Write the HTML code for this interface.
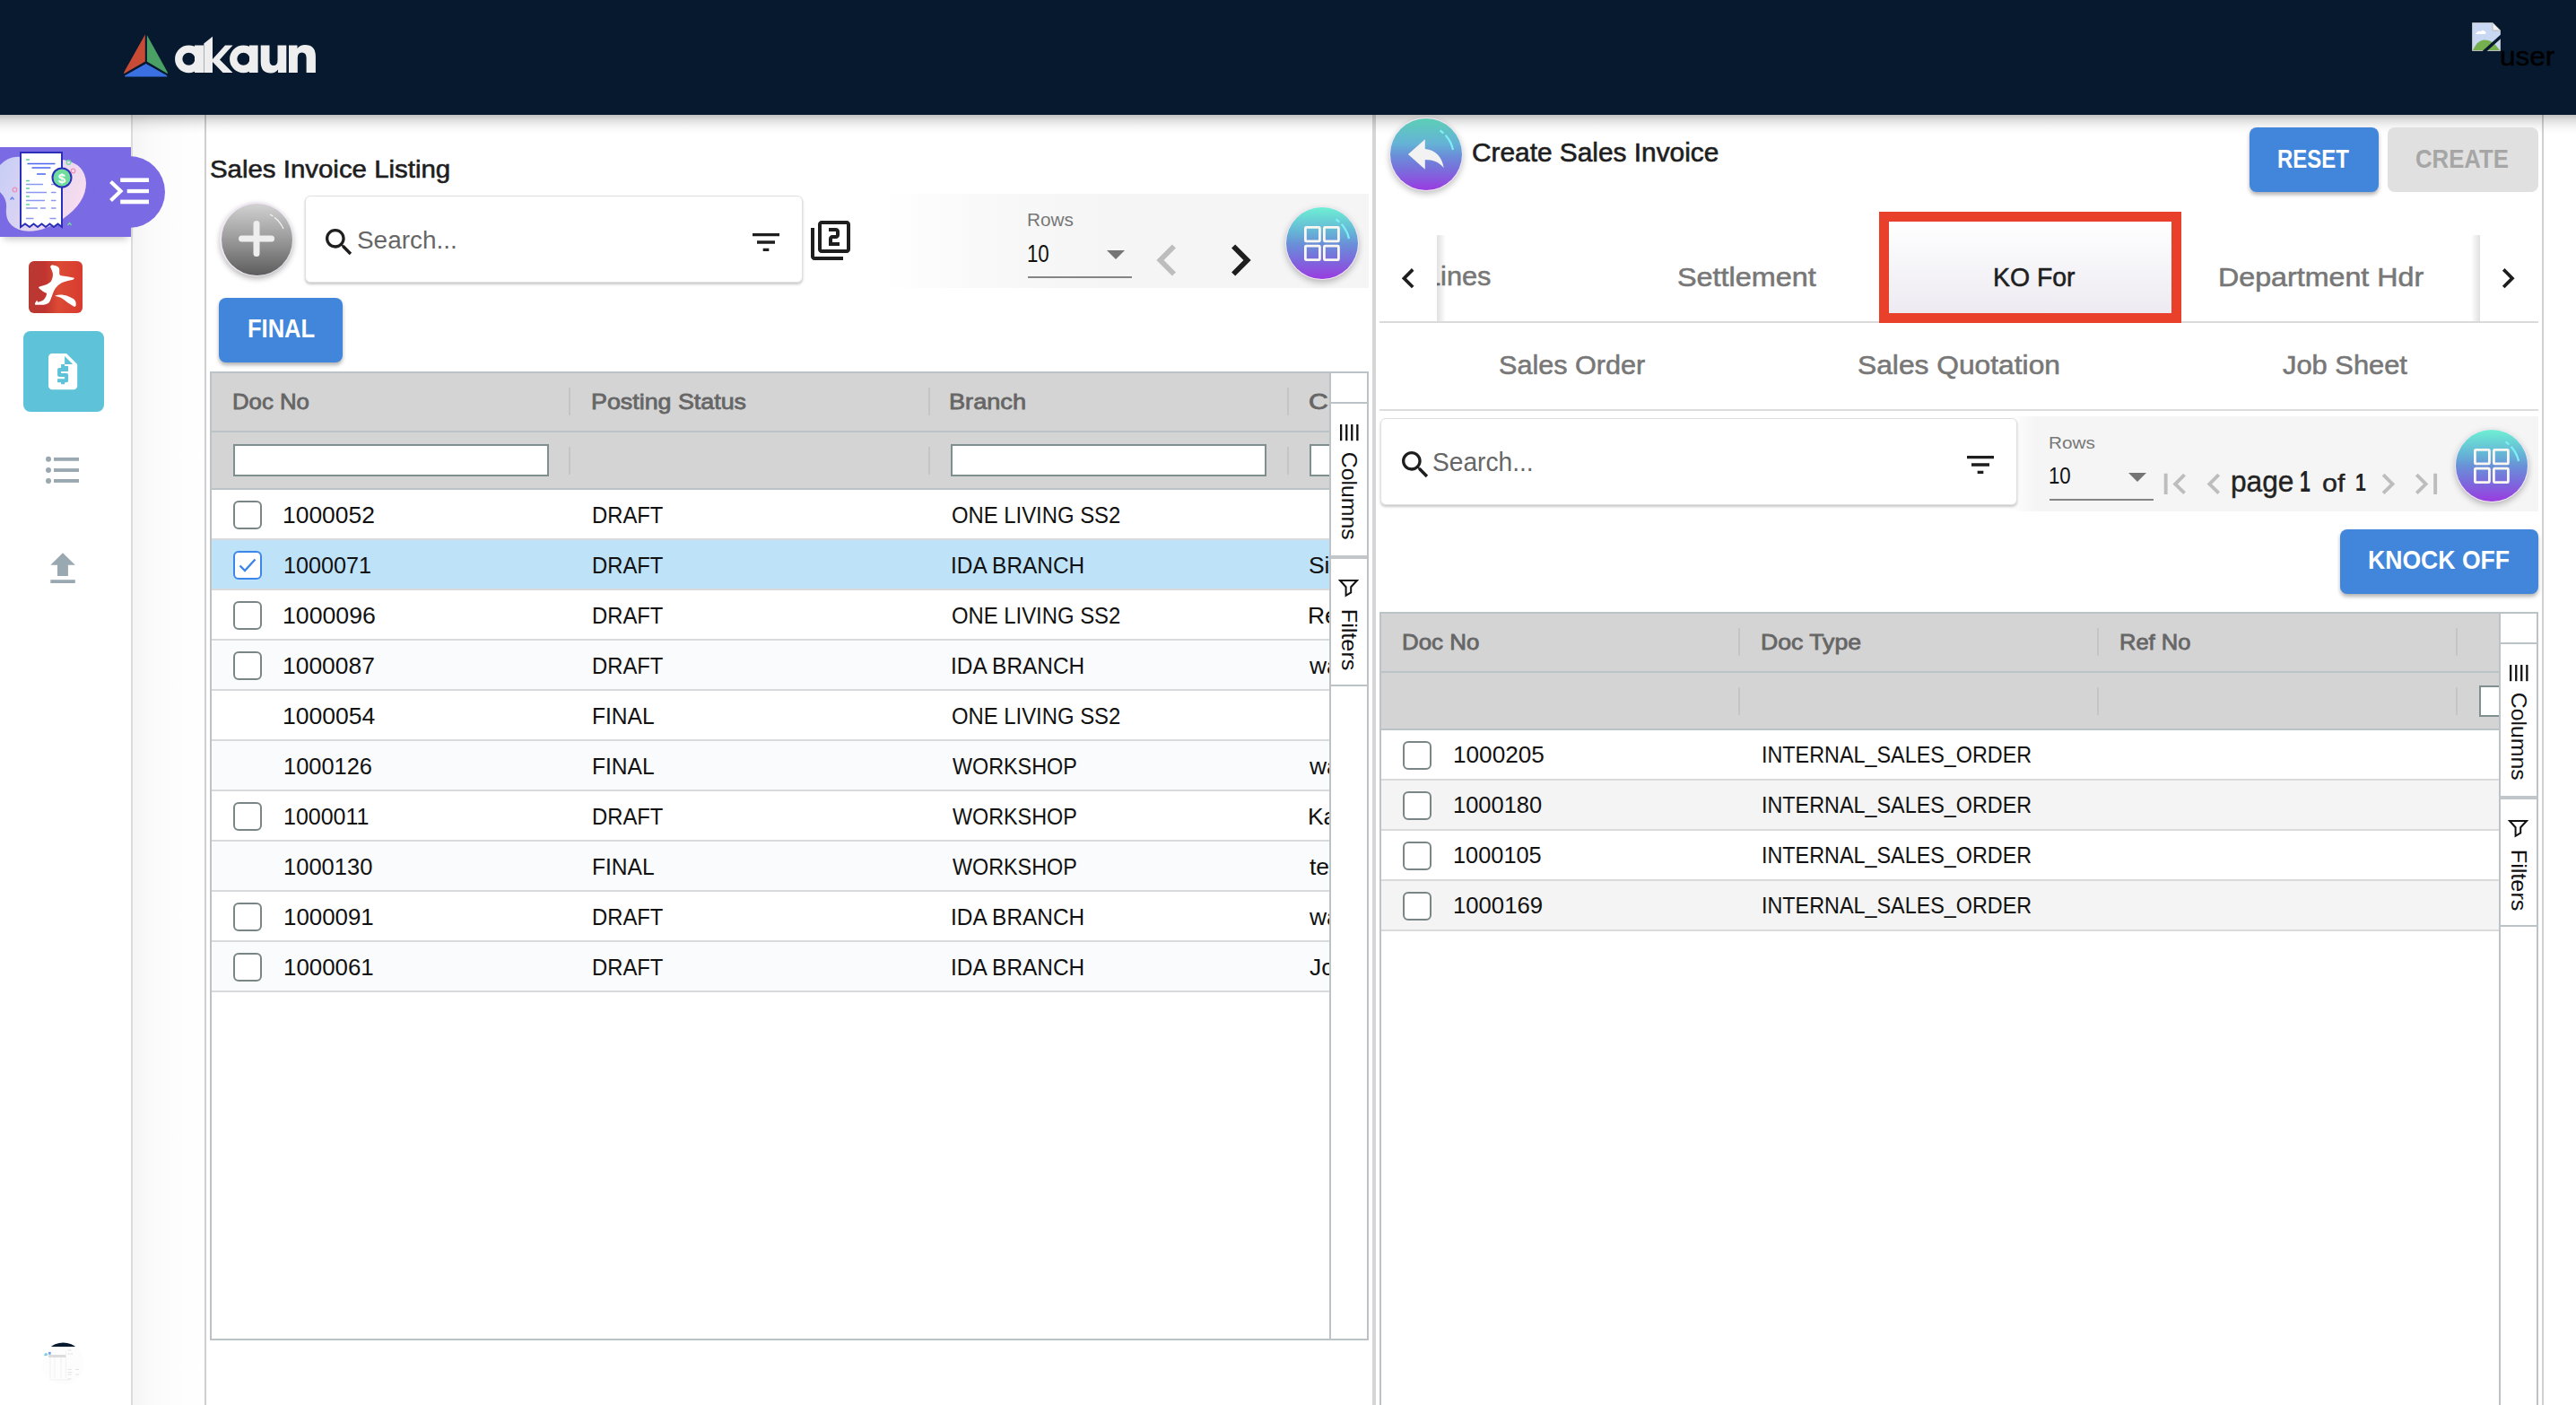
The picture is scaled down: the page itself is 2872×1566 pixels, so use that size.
<!DOCTYPE html>
<html><head><meta charset="utf-8"><style>
html,body{margin:0;padding:0;width:2872px;height:1566px;overflow:hidden;background:#fff}
.b{position:absolute;}
.t{position:absolute;white-space:nowrap;line-height:1;font-family:"Liberation Sans",sans-serif;transform-origin:0 0;}
svg.b{overflow:visible}
</style></head><body>
<div class="b" style="left:0px;top:0px;width:2872px;height:1566px;background:#ffffff;"></div><div class="b" style="left:148px;top:128px;width:80px;height:1438px;background:linear-gradient(to right,#f5f5f5,#fafafa 25%,#fdfdfd 55%,#ffffff);"></div><div class="b" style="left:146px;top:128px;width:2px;height:1438px;background:#dcdcdc;"></div><div class="b" style="left:228px;top:128px;width:2px;height:1438px;background:#cfcfcf;"></div><div class="b" style="left:1530px;top:128px;width:4px;height:1438px;background:#d6d6d6;"></div><div class="b" style="left:2834px;top:128px;width:2px;height:1438px;background:#d0d0d0;"></div><div class="b" style="left:0px;top:0px;width:2872px;height:128px;background:#06192f;"></div><div class="b" style="left:0px;top:128px;width:2872px;height:22px;background:linear-gradient(to bottom,rgba(0,0,0,0.24),rgba(0,0,0,0.13) 25%,rgba(0,0,0,0.05) 55%,rgba(0,0,0,0.015) 80%,rgba(0,0,0,0));"></div><svg class="b" style="left:130px;top:30px;" width="70" height="62" viewBox="0 0 70 62">
<path d="M32 8.5 Q32 8 31.5 9 L8.5 50 Q7 53 10 52 L32 39.5 Z" fill="#c84b36"/>
<path d="M33.5 8.5 L56.5 50 Q58 53 55 52 L33.5 39.5 Z" fill="#4ba066"/>
<path d="M32.7 41 L9.5 54 Q8 55.5 11 55.5 L54.5 55.5 Q57.5 55.5 56 54 Z" fill="#3b70e2"/>
<path d="M32.8 6 V39.2 L6 54.5 M32.8 39.2 L59 54.5" fill="none" stroke="#06192f" stroke-width="2"/>
</svg><svg class="b" style="left:190px;top:36px;" width="170" height="50" viewBox="0 0 170 50">
<g fill="#eeeeee">
<circle cx="20.4" cy="29.8" r="11.2" fill="none" stroke="#eeeeee" stroke-width="8.3"/>
<rect x="27" y="14.5" width="10" height="30.5"/>
<path d="M37.3 12.5 L47 4.7 L47 45 L37.3 45 Z"/>
<path d="M47 30 L61 14.5 L69.5 14.5 L55 30.5 L69.5 45 L58.5 45 L47 33 Z"/>
<circle cx="81.4" cy="29.8" r="11.2" fill="none" stroke="#eeeeee" stroke-width="8.3"/>
<rect x="88" y="14.5" width="9.6" height="30.5"/>
<path d="M100.7 14.5 L110.5 14.5 L110.5 31 Q110.5 37 115 37 Q119.5 37 119.5 31 L119.5 14.5 L129.3 14.5 L129.3 45 L120 45 L120 41.5 Q117 45.5 112 45.5 Q100.7 45.5 100.7 33 Z"/>
<path d="M132 45 L141.8 45 L141.8 28.5 Q141.8 22.5 146.5 22.5 Q151.6 22.5 151.6 28.5 L151.6 45 L161.9 45 L161.9 27 Q161.9 14 150 14 Q144.5 14 141.5 18 L141.5 14.5 L132 14.5 Z"/>
</g></svg><svg class="b" style="left:2756px;top:25px;" width="32" height="32" viewBox="0 0 32 32">
<path d="M0.5 0.5 H23 L31.5 9 V31.5 H0.5 Z" fill="#c8d8f2" stroke="#b9b9b9" stroke-width="1"/>
<path d="M23 0.5 V9 H31.5" fill="#f2f2f2" stroke="#b9b9b9" stroke-width="1"/>
<path d="M4 13 Q6 8.5 10 10 Q12 7.5 15 10.5 Q16.5 12 14.5 13 Z" fill="#ffffff"/>
<path d="M1 31 Q6 20 13 19.5 Q22 19 27 26 L31 31 Z" fill="#76b04e"/>
<path d="M13 33 L33 15" stroke="#06192f" stroke-width="3.5"/>
</svg><div class="t" style="left:2787.35px;top:48.10px;font-size:30.30px;color:#000;transform:scaleX(1.0397);-webkit-text-stroke:0.5px #000;">user</div><div class="b" style="left:0;top:164px;width:146px;height:100px;background:#7a6ae4;box-shadow:0 6px 8px -4px rgba(0,0,0,0.25)"></div><div class="b" style="left:104px;top:174px;width:80px;height:80px;border-radius:40px;background:#7a6ae4"></div><svg class="b" style="left:0px;top:164px;" width="100" height="100" viewBox="0 0 100 100">
<defs><linearGradient id="blob" x1="0" y1="0" x2="1" y2="0.3"><stop offset="0" stop-color="#c6cdf6"/><stop offset="1" stop-color="#f6dcee"/></linearGradient></defs>
<path d="M0 20 Q10 9 25 11 Q45 13 70 14 Q95 18 96 40 Q96 62 70 80 Q45 97 25 93 Q5 88 7 68 Q8 58 0 50 Z" fill="url(#blob)"/>
<path d="M23 6 H69 V89 L64.5 85.5 L60 89 L55.5 85.5 L51 89 L46.5 85.5 L42 89 L37.5 85.5 L33 89 L28 85.5 L23 89 Z" fill="#fff" stroke="#2b2fb8" stroke-width="2"/>
<g transform="translate(0 -4)"><g stroke-width="1.3" stroke-linecap="round">
<path d="M29.5 18 H32.5 M29.5 41.5 H32.5 M29.5 50 H32.5 M29.5 59 H32.5 M29.5 68 H32.5" stroke="#56d59a"/>
<path d="M31 22.5 H61 M36 27 H56 M41.5 34 H50.5" stroke="#4a66ee"/>
<path d="M29.5 45.5 H47.5 M29.5 54.5 H51.5 M29.5 63.5 H49.5 M29.5 72 H41.5 M45.5 72 H50.5 M57.5 72 H62 M57.5 45.5 H62 M57.5 54.5 H62 M57.5 63.5 H62 M29.5 83.5 H37 M56 83.5 H62" stroke="#8a98f0"/>
</g>
<circle cx="69" cy="38" r="10.5" fill="#6fdc9e" stroke="#2b2fb8" stroke-width="2"/>
<text x="69" y="43.5" font-family="Liberation Sans" font-weight="bold" font-size="15" fill="#fff" text-anchor="middle">$</text></g>
<circle cx="76.5" cy="17" r="2.3" fill="none" stroke="#6fdc9e" stroke-width="1.3"/>
<circle cx="81.5" cy="26.5" r="2.3" fill="none" stroke="#f090b8" stroke-width="1.3"/>
<circle cx="16.5" cy="47.5" r="2.3" fill="none" stroke="#f090b8" stroke-width="1.3"/>
<path d="M11.5 58.5 L13.5 56 L15.5 58.5" fill="none" stroke="#5a7cf0" stroke-width="1.3"/>
<path d="M75.5 87 L77.5 84.5 L79.5 87" fill="none" stroke="#6fdc9e" stroke-width="1.3"/>
</svg><svg class="b" style="left:120px;top:196px;" width="50" height="34" viewBox="0 0 50 34">
<path d="M3.5 6.5 L14.5 17 L3.5 27.5" fill="none" stroke="#fff" stroke-width="4.2"/>
<rect x="14.2" y="2.4" width="31.8" height="4.6" fill="#fff"/>
<rect x="21.7" y="14.9" width="24.3" height="4.3" fill="#fff"/>
<rect x="14.2" y="26.6" width="31.8" height="4.7" fill="#fff"/>
</svg><svg class="b" style="left:32px;top:291px;" width="60" height="58" viewBox="0 0 60 58">
<defs><linearGradient id="rg" x1="0" x2="1"><stop offset="0" stop-color="#b83a32"/><stop offset="0.3" stop-color="#c03430"/><stop offset="0.55" stop-color="#dc4a34"/><stop offset="1" stop-color="#d83c30"/></linearGradient></defs>
<rect x="0" y="0" width="60" height="58" rx="6" fill="url(#rg)"/>
<g fill="#fff">
<path d="M24.6 5.2 Q26 4.2 27 4.4 Q31 5 32.8 6.6 Q34.5 8 34.2 9.5 L34.2 14.4 Q35 15.8 36.2 16.3 Q43 17 50.7 18.7 Q51 20 49.2 20.7 Q42 22 37.1 24 Q32.5 26.5 29.9 30.3 Q28 33 27 36.1 L24.6 42.4 Q23.5 45.5 22.1 46.8 Q20 48.5 16.8 48.7 L7.6 48.7 Q6.5 48.3 6.9 47.3 L9.1 43.4 Q9.8 45.5 10.5 45.8 Q14 44.8 16.3 43.4 Q18.3 41.5 19.2 39.5 Q20 37.5 20.2 36.1 Q18 35 15.8 33.7 Q12.5 31.5 11 29.8 Q11.2 28.6 12 28.4 Q16.5 27.5 20.2 26 Q23.5 24.5 25 22.6 Q26.8 19 27 15.8 Q27 13 26 11 Q25 8.5 24.1 6.6 Z"/>
<path d="M29.4 38.6 Q33 37.4 37.1 37.6 Q42.5 38.3 46.8 40.5 Q51 42.3 52.1 44.4 Q53.2 47.5 52.6 49.7 Q52 51 50.7 50.7 Q47 48.8 43.4 46.3 Q39.5 43 36.2 41 Q33 39.3 29.9 39 Z"/>
</g></svg><div class="b" style="left:26px;top:369px;width:90px;height:90px;border-radius:8px;background:#5ec3d8"></div><svg class="b" style="left:45.8px;top:390px;" width="48.2" height="48.2" viewBox="0 0 24 24"><path d="M14 2H6c-1.1 0-1.99.9-1.99 2L4 20c0 1.1.89 2 1.99 2H18c1.1 0 2-.9 2-2V8l-6-6zm1 10h-4v1h3c.55 0 1 .45 1 1v3c0 .55-.45 1-1 1h-1v1h-2v-1H9v-2h4v-1h-3c-.55 0-1-.45-1-1v-3c0-.55.45-1 1-1h1V8h2v1h2v2zm-2-4V3.5L17.5 8H13z" fill="#fff"/></svg><svg class="b" style="left:48px;top:506px;" width="42" height="36" viewBox="0 0 42 36">
<g fill="#9aa8b1"><circle cx="6" cy="5.8" r="3"/><circle cx="6" cy="18" r="3"/><circle cx="6" cy="29.9" r="3"/>
<rect x="12" y="3.9" width="28" height="3.9"/><rect x="12" y="16.1" width="28" height="3.9"/><rect x="12" y="28" width="28" height="3.9"/></g></svg><svg class="b" style="left:54px;top:614px;" width="32" height="38" viewBox="0 0 32 38">
<g fill="#9aa8b1"><path d="M16 2.3 L29.8 15.7 H21.9 V27.9 H10 V15.7 H2.3 Z"/><rect x="2.3" y="32.2" width="27.5" height="3.8"/></g></svg><svg class="b" style="left:46px;top:1496px;" width="50" height="48" viewBox="0 0 50 48">
<defs><clipPath id="av"><circle cx="24.5" cy="24" r="23.5"/></clipPath></defs>
<g clip-path="url(#av)"><rect width="50" height="48" fill="#fdfdfd"/><rect y="0" width="50" height="5" fill="#06192f"/>
<rect x="8.1" y="10.9" width="2.6" height="2.8" fill="#6aa3ea"/>
<ellipse cx="4.8" cy="13.6" rx="2.3" ry="1.7" fill="#7ccfe0"/>
<rect x="8.1" y="14" width="19.2" height="3" fill="#dcdcdc"/>
<g stroke="#e6e6e6" stroke-width="0.5"><path d="M10 17 V40 M15 17 V40 M22 17 V40 M27.5 10 V40 M8 42 H31"/></g>
<g fill="#e2e2e2"><rect x="29.5" y="8.5" width="4" height="1"/><rect x="29.5" y="12.5" width="3" height="1"/><rect x="33" y="12.5" width="2" height="1"/><rect x="29.5" y="30" width="4" height="1"/><rect x="38" y="30" width="4" height="1"/><rect x="29.5" y="33" width="5" height="1"/><rect x="29.5" y="35.5" width="4" height="1"/><rect x="38" y="35.5" width="4" height="1"/><rect x="29.5" y="40.5" width="4" height="1"/></g>
</g></svg><div class="t" style="left:233.93px;top:175.35px;font-size:28.05px;color:#1e1e1e;transform:scaleX(1.0488);-webkit-text-stroke:0.6px #1e1e1e;">Sales Invoice Listing</div><div class="b" style="left:245px;top:225px;width:82px;height:83px;border-radius:50%;background:#efe8f4;box-shadow:0 3px 6px rgba(0,0,0,0.28)"></div><div class="b" style="left:246.5px;top:226.5px;width:79px;height:80px;border-radius:50%;background:linear-gradient(#d2d2d2,#9a9a9a 50%,#5c5c5c)"></div><svg class="b" style="left:245px;top:225px;" width="81" height="81" viewBox="0 0 81 81">
<path d="M56 14 A34 34 0 0 1 71 30" fill="none" stroke="#f4f4f4" stroke-width="1.2" stroke-dasharray="4 2 30"/>
<rect x="21" y="37.5" width="40" height="7" rx="3.5" fill="#eeeeee"/>
<rect x="37.5" y="21" width="7" height="40" rx="3.5" fill="#eeeeee"/></svg><div class="b" style="left:339.5px;top:218px;width:555px;height:97px;border-radius:6px;background:#fff;border:1px solid #e0e0e0;box-sizing:border-box;box-shadow:0 2px 3px rgba(0,0,0,0.22)"></div><svg class="b" style="left:358px;top:250px;" width="40" height="40" viewBox="0 0 24 24"><path d="M15.5 14h-.79l-.28-.27C15.41 12.59 16 11.11 16 9.5 16 5.91 13.09 3 9.5 3S3 5.91 3 9.5 5.91 16 9.5 16c1.61 0 3.09-.59 4.23-1.57l.27.28v.79l5 4.99L20.49 19l-4.99-5zm-6 0C7.01 14 5 11.99 5 9.5S7.01 5 9.5 5 14 7.01 14 9.5 11.99 14 9.5 14z" fill="#1e1e1e"/></svg><div class="t" style="left:398.04px;top:253.69px;font-size:27.18px;color:#666;transform:scaleX(1.0271);">Search...</div><svg class="b" style="left:834px;top:250px;" width="40" height="40" viewBox="0 0 24 24"><path d="M10 18h4v-2h-4v2zM3 6v2h18V6H3zm3 7h12v-2H6v2z" fill="#1e1e1e"/></svg><svg class="b" style="left:902px;top:244px;" width="48" height="48" viewBox="0 0 24 24"><path d="M3 5H1v16c0 1.1.9 2 2 2h16v-2H3V5zm18-4H7c-1.1 0-2 .9-2 2v14c0 1.1.9 2 2 2h14c1.1 0 2-.9 2-2V3c0-1.1-.9-2-2-2zm0 16H7V3h14v14zm-4-4h-4v-2h2c1.1 0 2-.89 2-2V7c0-1.11-.9-2-2-2h-4v2h4v2h-2c-1.1 0-2 .89-2 2v4h6v-2z" fill="#1e1e1e"/></svg><div class="b" style="left:985px;top:216px;width:541px;height:105px;background:linear-gradient(to right,rgba(245,245,245,0),rgba(245,245,245,0.6) 20%,#f5f5f5 45%,#f5f5f5);"></div><div class="t" style="left:1144.59px;top:235.89px;font-size:19.62px;color:#777;transform:scaleX(1.0577);">Rows</div><div class="t" style="left:1145.33px;top:268.68px;font-size:27.25px;color:#111;transform:scaleX(0.8164);">10</div><svg class="b" style="left:1232px;top:277px;" width="24" height="14" viewBox="0 0 24 14"><path d="M2 2 H22 L12 12 Z" fill="#757575"/></svg><div class="b" style="left:1146px;top:308px;width:116px;height:2px;background:#858585;"></div><svg class="b" style="left:1266px;top:255px;" width="70" height="70" viewBox="0 0 24 24"><g fill="#bdbdbd"><path d="M15.41 7.41L14 6l-6 6 6 6 1.41-1.41L10.83 12z"/></g></svg><svg class="b" style="left:1348px;top:255px;" width="70" height="70" viewBox="0 0 24 24"><g fill="#1e1e1e"><path d="M10 6L8.59 7.41 13.17 12l-4.58 4.59L10 18l6-6z"/></g></svg><div class="b" style="left:1433px;top:229.5px;width:82px;height:82px;border-radius:50%;background:#f1e9f5;box-shadow:0 3px 7px rgba(0,0,0,0.25)"></div><div class="b" style="left:1434px;top:230.5px;width:80px;height:80px;border-radius:50%;background:linear-gradient(#6ef0d4,#65b3d6 35%,#6a8ed8 52%,#7a6ddc 72%,#9a3ce0)"></div><svg class="b" style="left:1434px;top:230.5px;" width="80" height="80" viewBox="0 0 80 80"><path d="M55.5 13.5 A34 34 0 0 1 70 35" fill="none" stroke="#80eef6" stroke-width="2.2" stroke-dasharray="5 3 40"/><g fill="none" stroke="#faf6f2" stroke-width="2.8"><rect x="21.4" y="22.3" width="16" height="15.6" rx="1"/><rect x="42.4" y="22.3" width="16" height="15.6" rx="1"/><rect x="21.4" y="43.1" width="16" height="15.6" rx="1"/><rect x="42.4" y="43.1" width="16" height="15.6" rx="1"/></g></svg><div class="b" style="left:244px;top:332px;width:138px;height:72px;border-radius:8px;background:#4286dc;box-shadow:0 3px 4px rgba(0,0,0,0.3)"></div><div class="t" style="left:275.64px;top:352.47px;font-size:29.22px;color:#fff;font-weight:bold;transform:scaleX(0.8731);">FINAL</div><div class="b" style="left:234px;top:414px;width:1292px;height:1080px;border:2px solid #bcc3c7;box-sizing:border-box"></div><div class="b" style="left:236px;top:416px;width:1247px;height:64px;background:#d4d4d4;"></div><div class="b" style="left:236px;top:480px;width:1247px;height:2px;background:#bcc3c7;"></div><div class="b" style="left:236px;top:482px;width:1247px;height:62px;background:#d4d4d4;"></div><div class="b" style="left:236px;top:544px;width:1247px;height:2px;background:#bcc3c7;"></div><div class="b" style="left:634px;top:432px;width:2px;height:31px;background:#c2c6c8;"></div><div class="b" style="left:634px;top:498px;width:2px;height:31px;background:#c2c6c8;"></div><div class="b" style="left:1035px;top:432px;width:2px;height:31px;background:#c2c6c8;"></div><div class="b" style="left:1035px;top:498px;width:2px;height:31px;background:#c2c6c8;"></div><div class="b" style="left:1435px;top:432px;width:2px;height:31px;background:#c2c6c8;"></div><div class="b" style="left:1435px;top:498px;width:2px;height:31px;background:#c2c6c8;"></div><div class="t" style="left:259.24px;top:436.28px;font-size:24.71px;color:#666;transform:scaleX(1.0435);-webkit-text-stroke:0.8px #666;">Doc No</div><div class="t" style="left:658.60px;top:436.28px;font-size:24.71px;color:#666;transform:scaleX(1.0860);-webkit-text-stroke:0.8px #666;">Posting Status</div><div class="t" style="left:1058.33px;top:436.28px;font-size:24.71px;color:#666;transform:scaleX(1.0989);-webkit-text-stroke:0.8px #666;">Branch</div><div class="b" style="left:1440px;top:416px;width:43px;height:128px;overflow:hidden"><div class="t" style="left:19.49px;top:20.28px;font-size:24.71px;color:#666;transform:scaleX(1.2211);-webkit-text-stroke:0.8px #666;">Cu</div></div><div class="b" style="left:260px;top:495px;width:352px;height:36px;border:2px solid #7f8f8f;box-sizing:border-box;background:#fff"></div><div class="b" style="left:1060px;top:495px;width:352px;height:36px;border:2px solid #7f8f8f;box-sizing:border-box;background:#fff"></div><div class="b" style="left:1460px;top:495px;width:23px;height:36px;border:2px solid #7f8f8f;border-right:none;box-sizing:border-box;background:#fff"></div><div class="b" style="left:236px;top:600px;width:1247px;height:2px;background:#d8dadc;"></div><div class="b" style="left:260px;top:558px;width:32px;height:32px;border:2.5px solid #7a8686;border-radius:6px;box-sizing:border-box;background:#fff"></div><div class="t" style="left:315.47px;top:561.75px;font-size:25.4px;color:#111;transform:scaleX(1.040457592203365)">1000052</div><div class="t" style="left:660.04px;top:561.75px;font-size:25.4px;color:#111;transform:scaleX(0.9385436727529801)">DRAFT</div><div class="t" style="left:1060.63px;top:561.75px;font-size:25.4px;color:#111;transform:scaleX(0.9394271514649508)">ONE LIVING SS2</div><div class="b" style="left:236px;top:602px;width:1247px;height:54px;background:#bee2f8;"></div><div class="b" style="left:236px;top:656px;width:1247px;height:2px;background:#d8dadc;"></div><div class="b" style="left:260px;top:614px;width:32px;height:32px;border:2.5px solid #3b86e8;border-radius:6px;box-sizing:border-box;background:#fff"></div><svg class="b" style="left:260px;top:614px;" width="32" height="32" viewBox="0 0 32 32"><path d="M7.5 16.5 L13 22 L24.5 9.5" fill="none" stroke="#3b86e8" stroke-width="2.4"/></svg><div class="t" style="left:315.56px;top:617.75px;font-size:25.4px;color:#111;transform:scaleX(0.9920842122851354)">1000071</div><div class="t" style="left:660.04px;top:617.75px;font-size:25.4px;color:#111;transform:scaleX(0.9385436727529801)">DRAFT</div><div class="t" style="left:1059.50px;top:617.75px;font-size:25.4px;color:#111;transform:scaleX(0.9610541106604098)">IDA BRANCH</div><div class="b" style="left:1440px;top:602px;width:43px;height:54px;overflow:hidden"><div class="t" style="left:18.81px;top:15.75px;font-size:25.4px;color:#111;transform:scaleX(1.04)">Si</div></div><div class="b" style="left:236px;top:712px;width:1247px;height:2px;background:#d8dadc;"></div><div class="b" style="left:260px;top:670px;width:32px;height:32px;border:2.5px solid #7a8686;border-radius:6px;box-sizing:border-box;background:#fff"></div><div class="t" style="left:315.45px;top:673.75px;font-size:25.4px;color:#111;transform:scaleX(1.0507378630651303)">1000096</div><div class="t" style="left:660.04px;top:673.75px;font-size:25.4px;color:#111;transform:scaleX(0.9385436727529801)">DRAFT</div><div class="t" style="left:1060.63px;top:673.75px;font-size:25.4px;color:#111;transform:scaleX(0.9394271514649508)">ONE LIVING SS2</div><div class="b" style="left:1440px;top:658px;width:43px;height:54px;overflow:hidden"><div class="t" style="left:17.89px;top:15.75px;font-size:25.4px;color:#111;transform:scaleX(1.04)">Re</div></div><div class="b" style="left:236px;top:714px;width:1247px;height:54px;background:#fafbfd;"></div><div class="b" style="left:236px;top:768px;width:1247px;height:2px;background:#d8dadc;"></div><div class="b" style="left:260px;top:726px;width:32px;height:32px;border:2.5px solid #7a8686;border-radius:6px;box-sizing:border-box;background:#fff"></div><div class="t" style="left:315.47px;top:729.75px;font-size:25.4px;color:#111;transform:scaleX(1.040457592203365)">1000087</div><div class="t" style="left:660.04px;top:729.75px;font-size:25.4px;color:#111;transform:scaleX(0.9385436727529801)">DRAFT</div><div class="t" style="left:1059.50px;top:729.75px;font-size:25.4px;color:#111;transform:scaleX(0.9610541106604098)">IDA BRANCH</div><div class="b" style="left:1440px;top:714px;width:43px;height:54px;overflow:hidden"><div class="t" style="left:20.00px;top:15.75px;font-size:25.4px;color:#111;transform:scaleX(1.04)">wa</div></div><div class="b" style="left:236px;top:824px;width:1247px;height:2px;background:#d8dadc;"></div><div class="t" style="left:315.46px;top:785.75px;font-size:25.4px;color:#111;transform:scaleX(1.0453614038007468)">1000054</div><div class="t" style="left:659.98px;top:785.75px;font-size:25.4px;color:#111;transform:scaleX(0.9679982662717619)">FINAL</div><div class="t" style="left:1060.63px;top:785.75px;font-size:25.4px;color:#111;transform:scaleX(0.9394271514649508)">ONE LIVING SS2</div><div class="b" style="left:236px;top:826px;width:1247px;height:54px;background:#fafbfd;"></div><div class="b" style="left:236px;top:880px;width:1247px;height:2px;background:#d8dadc;"></div><div class="t" style="left:315.54px;top:841.75px;font-size:25.4px;color:#111;transform:scaleX(1.0011993533920844)">1000126</div><div class="t" style="left:659.98px;top:841.75px;font-size:25.4px;color:#111;transform:scaleX(0.9679982662717619)">FINAL</div><div class="t" style="left:1061.58px;top:841.75px;font-size:25.4px;color:#111;transform:scaleX(0.9190807855299922)">WORKSHOP</div><div class="b" style="left:1440px;top:826px;width:43px;height:54px;overflow:hidden"><div class="t" style="left:20.00px;top:15.75px;font-size:25.4px;color:#111;transform:scaleX(1.04)">wa</div></div><div class="b" style="left:236px;top:936px;width:1247px;height:2px;background:#d8dadc;"></div><div class="b" style="left:260px;top:894px;width:32px;height:32px;border:2.5px solid #7a8686;border-radius:6px;box-sizing:border-box;background:#fff"></div><div class="t" style="left:315.57px;top:897.75px;font-size:25.4px;color:#111;transform:scaleX(0.9842519685039369)">1000011</div><div class="t" style="left:660.04px;top:897.75px;font-size:25.4px;color:#111;transform:scaleX(0.9385436727529801)">DRAFT</div><div class="t" style="left:1061.58px;top:897.75px;font-size:25.4px;color:#111;transform:scaleX(0.9190807855299922)">WORKSHOP</div><div class="b" style="left:1440px;top:882px;width:43px;height:54px;overflow:hidden"><div class="t" style="left:17.89px;top:15.75px;font-size:25.4px;color:#111;transform:scaleX(1.04)">Ka</div></div><div class="b" style="left:236px;top:938px;width:1247px;height:54px;background:#fafbfd;"></div><div class="b" style="left:236px;top:992px;width:1247px;height:2px;background:#d8dadc;"></div><div class="t" style="left:315.54px;top:953.75px;font-size:25.4px;color:#111;transform:scaleX(1.005082697996084)">1000130</div><div class="t" style="left:659.98px;top:953.75px;font-size:25.4px;color:#111;transform:scaleX(0.9679982662717619)">FINAL</div><div class="t" style="left:1061.58px;top:953.75px;font-size:25.4px;color:#111;transform:scaleX(0.9190807855299922)">WORKSHOP</div><div class="b" style="left:1440px;top:938px;width:43px;height:54px;overflow:hidden"><div class="t" style="left:19.60px;top:15.75px;font-size:25.4px;color:#111;transform:scaleX(1.04)">te</div></div><div class="b" style="left:236px;top:1048px;width:1247px;height:2px;background:#d8dadc;"></div><div class="b" style="left:260px;top:1006px;width:32px;height:32px;border:2.5px solid #7a8686;border-radius:6px;box-sizing:border-box;background:#fff"></div><div class="t" style="left:315.51px;top:1009.75px;font-size:25.4px;color:#111;transform:scaleX(1.018191691555797)">1000091</div><div class="t" style="left:660.04px;top:1009.75px;font-size:25.4px;color:#111;transform:scaleX(0.9385436727529801)">DRAFT</div><div class="t" style="left:1059.50px;top:1009.75px;font-size:25.4px;color:#111;transform:scaleX(0.9610541106604098)">IDA BRANCH</div><div class="b" style="left:1440px;top:994px;width:43px;height:54px;overflow:hidden"><div class="t" style="left:20.00px;top:15.75px;font-size:25.4px;color:#111;transform:scaleX(1.04)">wa</div></div><div class="b" style="left:236px;top:1050px;width:1247px;height:54px;background:#fafbfd;"></div><div class="b" style="left:236px;top:1104px;width:1247px;height:2px;background:#d8dadc;"></div><div class="b" style="left:260px;top:1062px;width:32px;height:32px;border:2.5px solid #7a8686;border-radius:6px;box-sizing:border-box;background:#fff"></div><div class="t" style="left:315.51px;top:1065.75px;font-size:25.4px;color:#111;transform:scaleX(1.018191691555797)">1000061</div><div class="t" style="left:660.04px;top:1065.75px;font-size:25.4px;color:#111;transform:scaleX(0.9385436727529801)">DRAFT</div><div class="t" style="left:1059.50px;top:1065.75px;font-size:25.4px;color:#111;transform:scaleX(0.9610541106604098)">IDA BRANCH</div><div class="b" style="left:1440px;top:1050px;width:43px;height:54px;overflow:hidden"><div class="t" style="left:19.60px;top:15.75px;font-size:25.4px;color:#111;transform:scaleX(1.04)">Jo</div></div><div class="b" style="left:1482px;top:416px;width:2px;height:1076px;background:#bcc3c7;"></div><div class="b" style="left:1484px;top:448px;width:40px;height:2px;background:#bcc3c7;"></div><div class="b" style="left:1484px;top:619px;width:40px;height:4px;background:#c0c6ca;"></div><div class="b" style="left:1484px;top:763px;width:40px;height:2px;background:#bcc3c7;"></div><svg class="b" style="left:1493.8px;top:472.9px;" width="21" height="19" viewBox="0 0 21 19"><g fill="#111"><rect x="0" y="0" width="2.3" height="18.2"/><rect x="6.1" y="0" width="2.3" height="18.2"/><rect x="12.1" y="0" width="2.3" height="18.2"/><rect x="18.2" y="0" width="2.3" height="18.2"/></g></svg><div class="t" style="left:1494.70px;top:483.42px;font-size:24.50px;color:#111;transform-origin:0 20.74px;transform:translate(0,0) rotate(90deg) scaleX(1.0141);">Columns</div><svg class="b" style="left:1493.2px;top:645.6px;" width="22" height="20" viewBox="0 0 22 20"><path d="M1 1 H20 L13.2 8.2 V14.4 L7.6 17.8 V8.2 Z" fill="none" stroke="#111" stroke-width="2" stroke-linejoin="miter"/></svg><div class="t" style="left:1495.10px;top:657.54px;font-size:24.50px;color:#111;transform-origin:0 20.74px;transform:translate(0,0) rotate(90deg) scaleX(1.0294);">Filters</div><div class="b" style="left:1549px;top:131px;width:82px;height:82px;border-radius:50%;background:#f1e9f5;box-shadow:0 3px 7px rgba(0,0,0,0.25)"></div><div class="b" style="left:1550px;top:132px;width:80px;height:80px;border-radius:50%;background:linear-gradient(#5ccfb6,#65b3d6 35%,#6a8ed8 52%,#7a6ddc 72%,#9a3ce0)"></div><svg class="b" style="left:1550px;top:132px;" width="80" height="80" viewBox="0 0 80 80"><path d="M55.5 13.5 A34 34 0 0 1 70 35" fill="none" stroke="#80eef6" stroke-width="2.2" stroke-dasharray="5 3 40"/><path d="M19.9 40 L38.8 23.2 L38.8 33.9 C50.5 35 58 43 59.7 55.3 C55 49 48 46 38.8 46 L38.8 56.7 Z" fill="#f2f2f2"/></svg><div class="t" style="left:1641.01px;top:156.20px;font-size:28.71px;color:#1e1e1e;transform:scaleX(1.0397);-webkit-text-stroke:0.6px #1e1e1e;">Create Sales Invoice</div><div class="b" style="left:2508px;top:142px;width:144px;height:72px;border-radius:8px;background:#4286dc;box-shadow:0 3px 4px rgba(0,0,0,0.3)"></div><div class="t" style="left:2539.44px;top:162.89px;font-size:29.07px;color:#fff;font-weight:bold;transform:scaleX(0.8231);">RESET</div><div class="b" style="left:2662px;top:142px;width:168px;height:72px;border-radius:8px;background:#e0e0e0"></div><div class="t" style="left:2693.47px;top:162.89px;font-size:29.07px;color:#a6a6a6;font-weight:bold;transform:scaleX(0.8861);">CREATE</div><div class="b" style="left:1538px;top:358px;width:1292px;height:2px;background:#dadada;"></div><div class="b" style="left:2106px;top:248px;width:315px;height:101px;background:linear-gradient(#ffffff,#f7f6f9 40%,#edebf1);"></div><div class="b" style="left:1602px;top:262px;width:160px;height:96px;overflow:hidden"><div class="t" style="left:-13.39px;top:32.35px;font-size:29.0px;color:#777;-webkit-text-stroke:0.55px #777;transform:scaleX(1.06)">Lines</div></div><div class="b" style="left:1602px;top:262px;width:10px;height:96px;background:linear-gradient(to right,rgba(0,0,0,0.12),rgba(0,0,0,0));"></div><div class="b" style="left:2755px;top:262px;width:10px;height:96px;background:linear-gradient(to left,rgba(0,0,0,0.12),rgba(0,0,0,0));"></div><svg class="b" style="left:1547.7px;top:287.9px;" width="44.4" height="44.4" viewBox="0 0 24 24"><g fill="#1e1e1e"><path d="M15.41 7.41L14 6l-6 6 6 6 1.41-1.41L10.83 12z"/></g></svg><svg class="b" style="left:2774.1px;top:287.9px;" width="44.4" height="44.4" viewBox="0 0 24 24"><g fill="#1e1e1e"><path d="M10 6L8.59 7.41 13.17 12l-4.58 4.59L10 18l6-6z"/></g></svg><div class="t" style="left:1869.79px;top:294.64px;font-size:29.07px;color:#777;transform:scaleX(1.1145);-webkit-text-stroke:0.55px #777;">Settlement</div><div class="t" style="left:2221.73px;top:294.95px;font-size:28.71px;color:#1e1e1e;transform:scaleX(0.9893);-webkit-text-stroke:0.55px #1e1e1e;">KO For</div><div class="t" style="left:2473.42px;top:294.64px;font-size:29.07px;color:#777;transform:scaleX(1.1083);-webkit-text-stroke:0.55px #777;">Department Hdr</div><div class="b" style="left:2094.5px;top:236.3px;width:337px;height:123.7px;border:11px solid #e8402a;box-sizing:border-box"></div><div class="t" style="left:1671.12px;top:392.89px;font-size:29.07px;color:#777;transform:scaleX(1.0516);-webkit-text-stroke:0.55px #777;">Sales Order</div><div class="t" style="left:2071.07px;top:392.89px;font-size:29.07px;color:#777;transform:scaleX(1.0926);-webkit-text-stroke:0.55px #777;">Sales Quotation</div><div class="t" style="left:2545.29px;top:392.89px;font-size:29.07px;color:#777;transform:scaleX(1.0616);-webkit-text-stroke:0.55px #777;">Job Sheet</div><div class="b" style="left:1538px;top:456px;width:1292px;height:2px;background:#dcdcdc;"></div><div class="b" style="left:2240px;top:464px;width:590px;height:106px;background:linear-gradient(to right,rgba(245,245,245,0),#f5f5f5 5%,#f5f5f5);"></div><div class="b" style="left:1538.5px;top:465.5px;width:710px;height:97px;border-radius:6px;background:#fff;border:1px solid #e0e0e0;box-sizing:border-box;box-shadow:0 2px 3px rgba(0,0,0,0.22)"></div><svg class="b" style="left:1557.5px;top:497.5px;" width="40" height="40" viewBox="0 0 24 24"><path d="M15.5 14h-.79l-.28-.27C15.41 12.59 16 11.11 16 9.5 16 5.91 13.09 3 9.5 3S3 5.91 3 9.5 5.91 16 9.5 16c1.61 0 3.09-.59 4.23-1.57l.27.28v.79l5 4.99L20.49 19l-4.99-5zm-6 0C7.01 14 5 11.99 5 9.5S7.01 5 9.5 5 14 7.01 14 9.5 11.99 14 9.5 14z" fill="#1e1e1e"/></svg><div class="t" style="left:1597.48px;top:501.45px;font-size:28.71px;color:#666;transform:scaleX(0.9802);">Search...</div><svg class="b" style="left:2188px;top:497.5px;" width="40" height="40" viewBox="0 0 24 24"><path d="M10 18h4v-2h-4v2zM3 6v2h18V6H3zm3 7h12v-2H6v2z" fill="#1e1e1e"/></svg><div class="t" style="left:2283.59px;top:484.45px;font-size:19.26px;color:#777;transform:scaleX(1.0777);">Rows</div><div class="t" style="left:2284.33px;top:517.05px;font-size:26.53px;color:#111;transform:scaleX(0.8388);">10</div><svg class="b" style="left:2371px;top:525px;" width="24" height="14" viewBox="0 0 24 14"><path d="M2 2 H22 L12 12 Z" fill="#757575"/></svg><div class="b" style="left:2285px;top:556px;width:116px;height:2px;background:#858585;"></div><svg class="b" style="left:2400.5px;top:515.8px;" width="46.8" height="46.8" viewBox="0 0 24 24"><g fill="#bdbdbd"><path d="M18.41 16.59L13.82 12l4.59-4.59L17 6l-6 6 6 6zM6 6h2v12H6z"/></g></svg><svg class="b" style="left:2445.2px;top:515.8px;" width="46.8" height="46.8" viewBox="0 0 24 24"><g fill="#bdbdbd"><path d="M15.41 7.41L14 6l-6 6 6 6 1.41-1.41L10.83 12z"/></g></svg><div class="t" style="left:2487.44px;top:519.94px;font-size:33.14px;color:#222;transform:scaleX(0.9558);-webkit-text-stroke:0.4px #222;">page</div><div class="t" style="left:2563.97px;top:519.70px;font-size:33.43px;color:#222;font-weight:bold;transform:scaleX(0.6364);">1</div><div class="t" style="left:2588.53px;top:524.06px;font-size:28.28px;color:#222;transform:scaleX(1.0788);-webkit-text-stroke:0.4px #222;">of</div><div class="t" style="left:2626.47px;top:524.32px;font-size:27.98px;color:#222;font-weight:bold;transform:scaleX(0.7604);">1</div><svg class="b" style="left:2638.5px;top:515.8px;" width="46.8" height="46.8" viewBox="0 0 24 24"><g fill="#bdbdbd"><path d="M10 6L8.59 7.41 13.17 12l-4.58 4.59L10 18l6-6z"/></g></svg><svg class="b" style="left:2681.85px;top:515.8px;" width="46.8" height="46.8" viewBox="0 0 24 24"><g fill="#bdbdbd"><path d="M5.59 7.41L10.18 12l-4.59 4.59L7 18l6-6-6-6zM16 6h2v12h-2z"/></g></svg><div class="b" style="left:2737px;top:477.5px;width:82px;height:82px;border-radius:50%;background:#f1e9f5;box-shadow:0 3px 7px rgba(0,0,0,0.25)"></div><div class="b" style="left:2738px;top:478.5px;width:80px;height:80px;border-radius:50%;background:linear-gradient(#6ef0d4,#65b3d6 35%,#6a8ed8 52%,#7a6ddc 72%,#9a3ce0)"></div><svg class="b" style="left:2738px;top:478.5px;" width="80" height="80" viewBox="0 0 80 80"><path d="M55.5 13.5 A34 34 0 0 1 70 35" fill="none" stroke="#80eef6" stroke-width="2.2" stroke-dasharray="5 3 40"/><g fill="none" stroke="#faf6f2" stroke-width="2.8"><rect x="21.4" y="22.3" width="16" height="15.6" rx="1"/><rect x="42.4" y="22.3" width="16" height="15.6" rx="1"/><rect x="21.4" y="43.1" width="16" height="15.6" rx="1"/><rect x="42.4" y="43.1" width="16" height="15.6" rx="1"/></g></svg><div class="b" style="left:2609px;top:590px;width:221px;height:72px;border-radius:8px;background:#4286dc;box-shadow:0 3px 4px rgba(0,0,0,0.3)"></div><div class="t" style="left:2639.77px;top:610.39px;font-size:29.07px;color:#fff;font-weight:bold;transform:scaleX(0.9152);">KNOCK OFF</div><div class="b" style="left:1538px;top:682px;width:1292px;height:900px;border:2px solid #bcc3c7;box-sizing:border-box"></div><div class="b" style="left:1540px;top:684px;width:1246px;height:64px;background:#d4d4d4;"></div><div class="b" style="left:1540px;top:748px;width:1246px;height:2px;background:#bcc3c7;"></div><div class="b" style="left:1540px;top:750px;width:1246px;height:62px;background:#d4d4d4;"></div><div class="b" style="left:1540px;top:812px;width:1246px;height:2px;background:#bcc3c7;"></div><div class="b" style="left:1938px;top:700px;width:2px;height:31px;background:#c2c6c8;"></div><div class="b" style="left:1938px;top:766px;width:2px;height:31px;background:#c2c6c8;"></div><div class="b" style="left:2338px;top:700px;width:2px;height:31px;background:#c2c6c8;"></div><div class="b" style="left:2338px;top:766px;width:2px;height:31px;background:#c2c6c8;"></div><div class="b" style="left:2738px;top:700px;width:2px;height:31px;background:#c2c6c8;"></div><div class="b" style="left:2738px;top:766px;width:2px;height:31px;background:#c2c6c8;"></div><div class="t" style="left:1562.93px;top:704.08px;font-size:24.71px;color:#666;transform:scaleX(1.0480);-webkit-text-stroke:0.8px #666;">Doc No</div><div class="t" style="left:1962.87px;top:704.08px;font-size:24.71px;color:#666;transform:scaleX(1.0787);-webkit-text-stroke:0.8px #666;">Doc Type</div><div class="t" style="left:2363.21px;top:704.08px;font-size:24.71px;color:#666;transform:scaleX(1.0321);-webkit-text-stroke:0.8px #666;">Ref No</div><div class="b" style="left:2764px;top:764px;width:22px;height:35px;border:2px solid #7f8f8f;border-right:none;box-sizing:border-box;background:#fff"></div><div class="b" style="left:1540px;top:868px;width:1246px;height:2px;background:#d8dadc;"></div><div class="b" style="left:1564px;top:826px;width:32px;height:32px;border:2.5px solid #7a8686;border-radius:6px;box-sizing:border-box;background:#fff"></div><div class="t" style="left:1619.74px;top:829.25px;font-size:25.4px;color:#111;transform:scaleX(1.0304010011993534)">1000205</div><div class="t" style="left:1964.10px;top:829.25px;font-size:25.4px;color:#111;transform:scaleX(0.9198183821691047)">INTERNAL_SALES_ORDER</div><div class="b" style="left:1540px;top:870px;width:1246px;height:54px;background:#f4f4f4;"></div><div class="b" style="left:1540px;top:924px;width:1246px;height:2px;background:#d8dadc;"></div><div class="b" style="left:1564px;top:882px;width:32px;height:32px;border:2.5px solid #7a8686;border-radius:6px;box-sizing:border-box;background:#fff"></div><div class="t" style="left:1619.79px;top:885.25px;font-size:25.4px;color:#111;transform:scaleX(1.0029996250468693)">1000180</div><div class="t" style="left:1964.10px;top:885.25px;font-size:25.4px;color:#111;transform:scaleX(0.9198183821691047)">INTERNAL_SALES_ORDER</div><div class="b" style="left:1540px;top:980px;width:1246px;height:2px;background:#d8dadc;"></div><div class="b" style="left:1564px;top:938px;width:32px;height:32px;border:2.5px solid #7a8686;border-radius:6px;box-sizing:border-box;background:#fff"></div><div class="t" style="left:1619.80px;top:941.25px;font-size:25.4px;color:#111;transform:scaleX(0.9980706054127342)">1000105</div><div class="t" style="left:1964.10px;top:941.25px;font-size:25.4px;color:#111;transform:scaleX(0.9198183821691047)">INTERNAL_SALES_ORDER</div><div class="b" style="left:1540px;top:982px;width:1246px;height:54px;background:#f4f4f4;"></div><div class="b" style="left:1540px;top:1036px;width:1246px;height:2px;background:#d8dadc;"></div><div class="b" style="left:1564px;top:994px;width:32px;height:32px;border:2.5px solid #7a8686;border-radius:6px;box-sizing:border-box;background:#fff"></div><div class="t" style="left:1619.77px;top:997.25px;font-size:25.4px;color:#111;transform:scaleX(1.0119258965308382)">1000169</div><div class="t" style="left:1964.10px;top:997.25px;font-size:25.4px;color:#111;transform:scaleX(0.9198183821691047)">INTERNAL_SALES_ORDER</div><div class="b" style="left:2786px;top:684px;width:2px;height:900px;background:#bcc3c7;"></div><div class="b" style="left:2788px;top:716px;width:40px;height:2px;background:#bcc3c7;"></div><div class="b" style="left:2788px;top:887px;width:40px;height:4px;background:#c0c6ca;"></div><div class="b" style="left:2788px;top:1031px;width:40px;height:2px;background:#bcc3c7;"></div><svg class="b" style="left:2797.8px;top:740.9px;" width="21" height="19" viewBox="0 0 21 19"><g fill="#111"><rect x="0" y="0" width="2.3" height="18.2"/><rect x="6.1" y="0" width="2.3" height="18.2"/><rect x="12.1" y="0" width="2.3" height="18.2"/><rect x="18.2" y="0" width="2.3" height="18.2"/></g></svg><div class="t" style="left:2798.70px;top:751.42px;font-size:24.50px;color:#111;transform-origin:0 20.74px;transform:translate(0,0) rotate(90deg) scaleX(1.0141);">Columns</div><svg class="b" style="left:2797.2px;top:913.6px;" width="22" height="20" viewBox="0 0 22 20"><path d="M1 1 H20 L13.2 8.2 V14.4 L7.6 17.8 V8.2 Z" fill="none" stroke="#111" stroke-width="2" stroke-linejoin="miter"/></svg><div class="t" style="left:2799.10px;top:925.54px;font-size:24.50px;color:#111;transform-origin:0 20.74px;transform:translate(0,0) rotate(90deg) scaleX(1.0294);">Filters</div>
</body></html>
